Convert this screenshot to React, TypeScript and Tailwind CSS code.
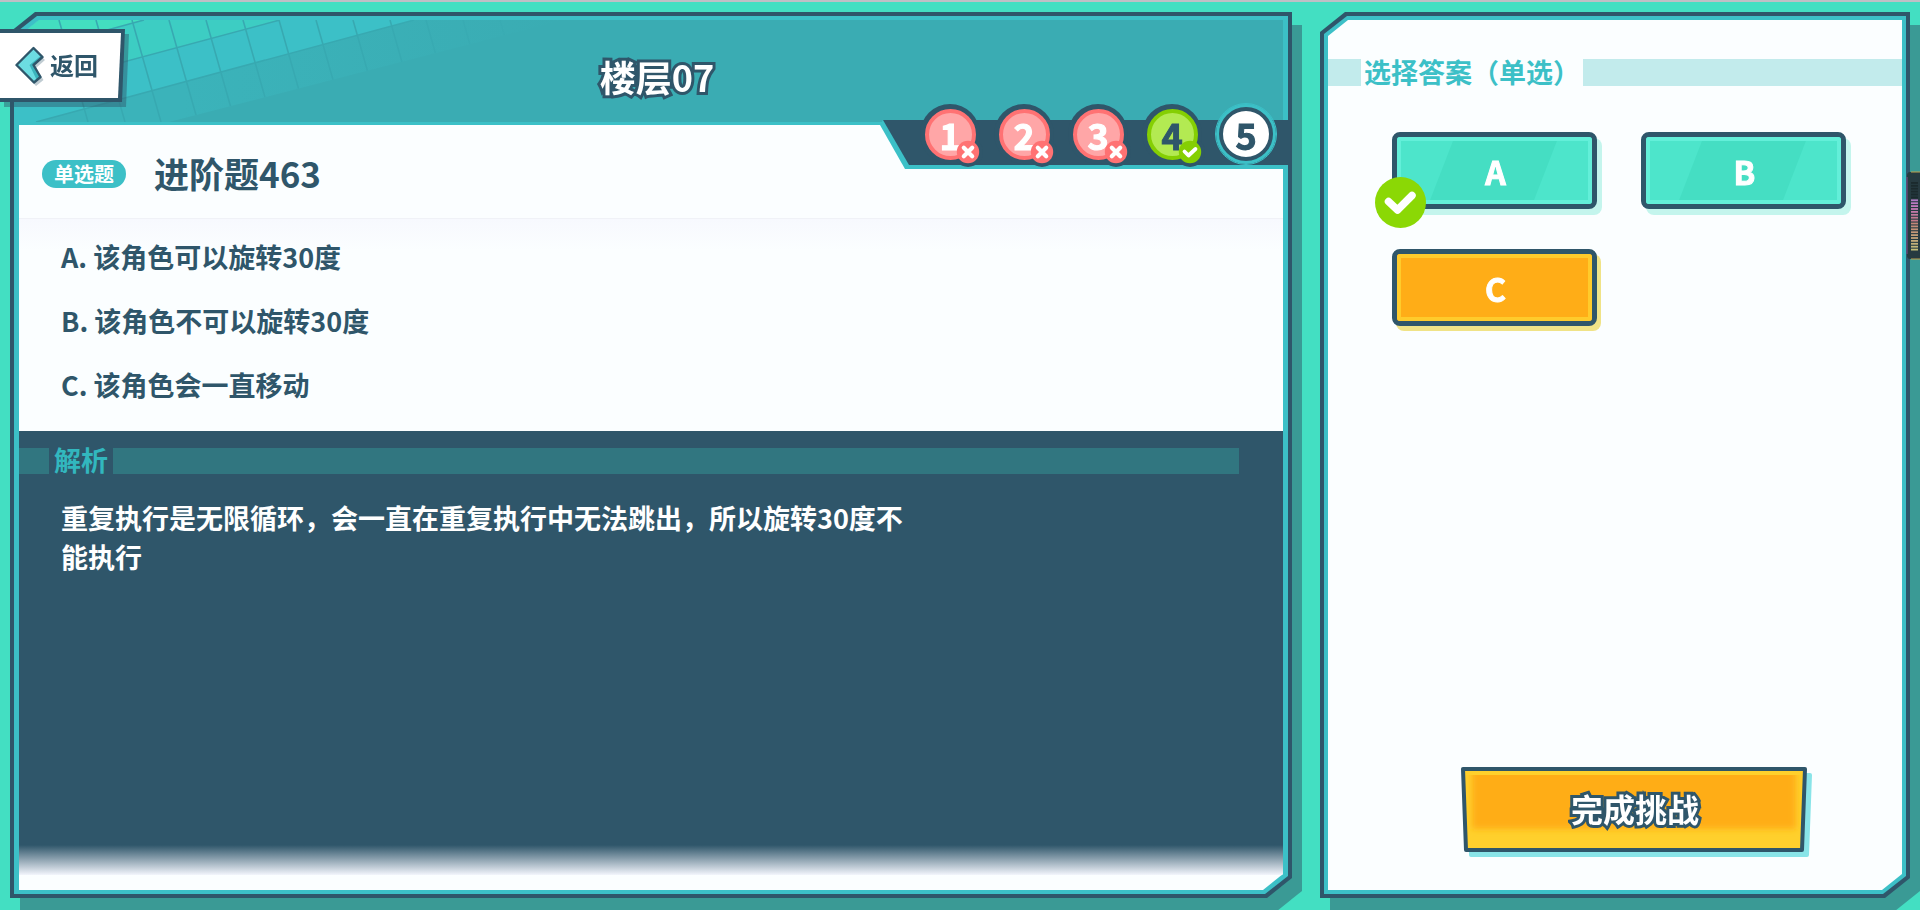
import type { ReactNode } from "react";

type StepState = "wrong" | "right" | "current";

const steps: { n: number; state: StepState }[] = [
  { n: 1, state: "wrong" },
  { n: 2, state: "wrong" },
  { n: 3, state: "wrong" },
  { n: 4, state: "right" },
  { n: 5, state: "current" },
];

const options = [
  "A. 该角色可以旋转30度",
  "B. 该角色不可以旋转30度",
  "C. 该角色会一直移动",
];

const circleStyles: Record<StepState, string> = {
  wrong: "border-[#ff7273] bg-[#ffa6a7] text-white",
  right: "border-[#85cf03] bg-[#b3ea52] text-[#2f566a]",
  current: "border-[#2f566a] bg-white text-[#2f566a]",
};

function Frame({ children, overlay, wide }: { children: ReactNode; overlay?: ReactNode; wide?: boolean }) {
  return (
    <div className="flex drop-shadow-[10px_13px_0_#3a9a95]">
      <div className="flex flex-1 bg-[#2f566a] p-1 [clip-path:polygon(25px_0,100%_0,100%_calc(100%-20px),calc(100%-25px)_100%,0_100%,0_20px)]">
        <div
          className={`relative flex flex-1 bg-[#3cc0c7] py-1 [clip-path:polygon(23px_0,100%_0,100%_calc(100%-18px),calc(100%-23px)_100%,0_100%,0_18px)] ${
            wide ? "px-[5px]" : "px-1"
          }`}
        >
          <div className="flex flex-1 flex-col bg-[#fbfeff] [clip-path:polygon(20px_0,100%_0,100%_calc(100%-16px),calc(100%-20px)_100%,0_100%,0_16px)]">
            {children}
          </div>
          {overlay}
        </div>
      </div>
    </div>
  );
}

function HeaderPattern() {
  const steep = [40, 77, 113, 150, 187, 224, 260, 297, 334, 371, 407, 444, 481];
  return (
    <svg className="absolute left-0 top-0 h-[102px] w-[560px]" viewBox="0 0 560 102" aria-hidden="true">
      <defs>
        <linearGradient id="fade" x1="0" y1="0" x2="1" y2="0">
          <stop offset="0.3" stopColor="#3bb3ba" />
          <stop offset="1" stopColor="#3aacb3" />
        </linearGradient>
        <linearGradient id="line" gradientUnits="userSpaceOnUse" x1="0" y1="0" x2="520" y2="0">
          <stop offset="0.2" stopColor="#37a9b1" />
          <stop offset="0.7" stopColor="#37a9b1" />
          <stop offset="1" stopColor="#37a9b1" stopOpacity="0.3" />
        </linearGradient>
        <clipPath id="lit">
          <polygon points="0,0 545,0 150,102 0,102" />
        </clipPath>
      </defs>
      <polygon points="0,0 545,0 150,102 0,102" fill="url(#fade)" />
      <polygon points="0,0 395,0 17,102 0,102" fill="#3cc0c7" />
      <polygon points="0,0 261,0 0,70" fill="#3dcdc3" />
      <polygon points="0,0 125,0 0,34" fill="#43dec0" />
      <g stroke="url(#line)" strokeWidth="1.6" fill="none" clipPath="url(#lit)">
        <path d="M125 0L0 34M261 0L0 70M395 0L17 102" />
        {steep.map((x) => (
          <path key={x} d={`M${x} 0L${x + 29} 102`} />
        ))}
      </g>
    </svg>
  );
}

function Badge({ right }: { right: boolean }) {
  return (
    <svg className="absolute -bottom-[3px] -right-[3px] h-[30px] w-[30px]" viewBox="0 0 30 30" aria-hidden="true">
      <circle cx="15" cy="15" r="11.2" fill={right ? "#85cf03" : "#ff7273"} />
      <path
        d={right ? "M9.5 14.5L13.5 18.5L20.5 12" : "M10.8 10.8L19.2 19.2M19.2 10.8L10.8 19.2"}
        stroke="#fff"
        strokeWidth={right ? 3.8 : 4.2}
        strokeLinecap="round"
        strokeLinejoin="round"
        fill="none"
      />
    </svg>
  );
}

function Steps() {
  return (
    <nav aria-label="题目" className="absolute right-0 top-[104px] h-[49px] w-[408px]">
      <svg className="absolute inset-0 h-full w-full" viewBox="0 0 408 49" aria-hidden="true">
        <polygon points="3,0 408,0 408,49 25,49 0,5" fill="#3cc0c7" />
        <polygon points="3,0 408,0 408,45 29,45" fill="#2f566a" />
      </svg>
      <ol className="relative -top-4 flex justify-end gap-[14px] pr-3">
        {steps.map(({ n, state }) => (
          <li
            key={n}
            className={`relative flex h-[60px] w-[60px] items-center justify-center rounded-full ${
              state === "current" ? "bg-[#3cc0c7] outline-1 outline-[#3cc0c7]" : "bg-[#2f566a]"
            }`}
          >
            {state !== "current" && (
              <span className="absolute -bottom-[3px] -right-[3px] h-[30px] w-[30px] rounded-full bg-[#2f566a]" />
            )}
            <button
              type="button"
              className={`relative flex items-center justify-center rounded-full border-4 text-[36px] leading-none font-bold [-webkit-text-stroke:1px_currentColor] ${
                state === "current" ? "h-[54px] w-[54px]" : "h-[51px] w-[51px]"
              } ${circleStyles[state]}`}
            >
              {n}
            </button>
            {state !== "current" && <Badge right={state === "right"} />}
          </li>
        ))}
      </ol>
    </nav>
  );
}

function BackButton() {
  return (
    <div className="absolute left-0 top-[29px] drop-shadow-[4px_5px_0_rgba(47,86,106,0.45)]">
      <button
        type="button"
        className="block bg-[#2f566a] py-1 pr-1 [clip-path:polygon(0_0,100%_0,calc(100%-3px)_100%,0_100%)]"
      >
        <span className="flex h-[65px] w-[121px] items-center gap-1 bg-white pl-[15px] text-[24px] font-bold text-[#2f566a] [clip-path:polygon(0_0,100%_0,calc(100%-3px)_100%,0_100%)]">
          <svg className="h-[42px] w-[31px] shrink-0" viewBox="0 0 31 42" aria-hidden="true">
            <path d="M20.5 6L30 15L21 23L28.5 35L21 41L4 23Z" fill="#2f566a" opacity="0.3" />
            <path d="M18.5 3L1.5 20L19 37.5L25.5 32L18.5 20L27.5 12Z" fill="#6cdde2" />
            <path d="M25.5 11L14.5 20L21.5 34.5L25.5 32L18.5 20L27.5 12Z" fill="#3cb3bc" />
            <path
              d="M18.5 3L1.5 20L19 37.5L25.5 32L18.5 20L27.5 12Z"
              fill="none"
              stroke="#2f566a"
              strokeWidth="2.4"
              strokeLinejoin="round"
            />
          </svg>
          <span className="pb-[2px]">返回</span>
        </span>
      </button>
    </div>
  );
}

function AnswerButton({ label, chosen, correct }: { label: string; chosen?: boolean; correct?: boolean }) {
  return (
    <button
      type="button"
      className={`relative flex h-[77px] items-center justify-center rounded-[8px] border-[5px] border-[#2f566a] pl-[2px] text-[32px] leading-none font-bold text-white ${
        chosen
          ? "bg-[#ffad17] shadow-[4px_5px_0_#f0e387]"
          : "bg-[#4de5cb] shadow-[5px_6px_0_#c4f5ed]"
      }`}
    >
      {!chosen && (
        <span className="absolute inset-y-1 left-[17%] w-[65%] bg-[#45dec3] [clip-path:polygon(18%_0,100%_0,82%_100%,0_100%)]" />
      )}
      <span
        className={`absolute inset-0 rounded-[3px] border-4 ${chosen ? "border-[#ffcb2b]" : "border-[#63efd9]"}`}
      />
      <span className="relative [-webkit-text-stroke:1px_#fff]">{label}</span>
      {correct && (
        <svg className="absolute -bottom-[24px] -left-[22px] h-[51px] w-[51px]" viewBox="0 0 51 51" aria-hidden="true">
          <circle cx="25.5" cy="25.5" r="25.5" fill="#8bd805" />
          <path
            d="M13.5 24.5L22.5 33L37 18.5"
            stroke="#fff"
            strokeWidth="7.5"
            strokeLinecap="round"
            strokeLinejoin="round"
            fill="none"
          />
        </svg>
      )}
    </button>
  );
}

function SubmitButton() {
  return (
    <button type="button" className="relative flex h-[85px] w-[346px] items-center justify-center">
      <svg
        className="absolute inset-0 h-full w-full overflow-visible"
        viewBox="0 0 346 85"
        preserveAspectRatio="none"
        aria-hidden="true"
      >
        <defs>
          <filter id="soft" x="-10%" y="-20%" width="120%" height="140%">
            <feGaussianBlur stdDeviation="3" />
          </filter>
          <clipPath id="face">
            <polygon points="4,8 342,8 339,81 7,81" />
          </clipPath>
        </defs>
        <polygon
          points="9,8 349,8 346,88 10,88"
          fill="#89e4e8"
          stroke="#89e4e8"
          strokeWidth="4"
          strokeLinejoin="round"
        />
        <polygon
          points="2,2 344,2 341,83 5,83"
          fill="#ffd02c"
          stroke="#2f566a"
          strokeWidth="4"
          strokeLinejoin="round"
        />
        <g clipPath="url(#face)">
          <rect x="11" y="-4" width="324" height="66" fill="#ffad17" filter="url(#soft)" />
        </g>
      </svg>
      <span className="relative pb-1 pl-[2px] text-[32px] leading-none font-bold text-white [-webkit-text-stroke:6px_#2f566a] [paint-order:stroke_fill] [stroke-linejoin:round]">
        完成挑战
      </span>
    </button>
  );
}

function SideMeter() {
  const bars = Array.from({ length: 24 }, (_, i) => i);
  const tint = (i: number) => (i < 6 ? "#1b2a2d" : `hsl(${i < 14 ? 285 + (i - 6) * 9 : 10 + (i - 14) * 5} 38% 62%)`);
  return (
    <svg className="absolute right-0 top-[171px] h-[89px] w-[14px]" viewBox="0 0 14 89" aria-hidden="true">
      <path d="M14 1H4Q1 1 1 5V84Q1 88 4 88H14Z" fill="#263a40" />
      <path d="M1 6V83" stroke="#75497f" strokeWidth="1.2" />
      <path d="M14 1H5M14 88H5" stroke="#c0a04c" strokeWidth="1.2" />
      {bars.map((i) => (
        <rect key={i} x="5" y={11 + i * 2.9} width="7" height="1.8" fill={tint(i)} />
      ))}
    </svg>
  );
}

export default function App() {
  return (
    <div className="relative flex min-h-screen flex-col overflow-hidden border-t-2 border-[#bfbfc5] bg-[#43dfc2] font-['Noto_Sans_CJK_SC',sans-serif] text-[#2f566a]">
      <main className="grid flex-1 grid-cols-[1282fr_590fr] gap-7 px-[10px] pb-3 pt-[10px]">
        <Frame wide overlay={<Steps />}>
          <header className="relative flex h-[105px] items-center justify-center border-b-[3px] border-[#3cc0c7] bg-[#3aacb3] pl-3 pt-[10px]">
            <HeaderPattern />
            <h1 className="relative text-[36px] leading-none font-bold text-white [-webkit-text-stroke:6px_#2f566a] [paint-order:stroke_fill]">
              楼层07
            </h1>
          </header>
          <div className="flex h-[93px] items-center gap-7 pl-[23px] pt-[5px]">
            <span className="flex h-7 items-center rounded-full bg-[#3cc0c7] px-3 text-[20px] leading-none font-bold text-white">
              单选题
            </span>
            <h2 className="pb-1 text-[35px] leading-none font-bold">进阶题463</h2>
          </div>
          <ul className="border-t border-[#f0f2f7] bg-linear-to-b from-[#f7f9fe] to-[#fbfeff] to-[32px] pb-[14px] pl-[42px] pt-[6px] text-[27px] leading-[64px] font-bold">
            {options.map((text) => (
              <li key={text}>{text}</li>
            ))}
          </ul>
          <section className="mb-[15px] flex-1 bg-[linear-gradient(to_bottom,#2f566a_calc(100%-30px),#f3f5fc_100%)] pt-[17px]">
            <div className="flex h-[26px] items-center">
              <span className="h-full w-[30px] bg-[#317680]" />
              <h3 className="px-[5px] pb-[3px] text-[27px] leading-none font-bold text-[#32b7be]">解析</h3>
              <span className="mr-[44px] h-full flex-1 bg-[#317680]" />
            </div>
            <p className="ml-[42px] mt-6 max-w-[848px] text-[27px] leading-[39px] font-bold text-white">
              重复执行是无限循环，会一直在重复执行中无法跳出，所以旋转30度不能执行
            </p>
          </section>
        </Frame>
        <Frame>
          <div className="mt-[39px] flex h-[27px] items-center">
            <span className="h-full w-[33px] bg-[#c2ebec]" />
            <h2 className="px-[3px] pb-[3px] text-[27px] leading-none font-bold text-[#3cc0c7]">选择答案（单选）</h2>
            <span className="h-full flex-1 bg-[#c2ebec]" />
          </div>
          <div className="mt-[46px] grid grid-cols-2 gap-x-[44px] gap-y-10 pl-16 pr-14">
            <AnswerButton label="A" correct />
            <AnswerButton label="B" />
            <AnswerButton label="C" chosen />
          </div>
          <div className="mb-[38px] mt-auto flex justify-center pl-[38px]">
            <SubmitButton />
          </div>
        </Frame>
      </main>
      <div className="absolute left-0 right-0 top-0">
        <div className="absolute left-0 -top-[2px]">
          <BackButton />
        </div>
        <div className="absolute right-0 -top-[2px]">
          <SideMeter />
        </div>
      </div>
    </div>
  );
}
